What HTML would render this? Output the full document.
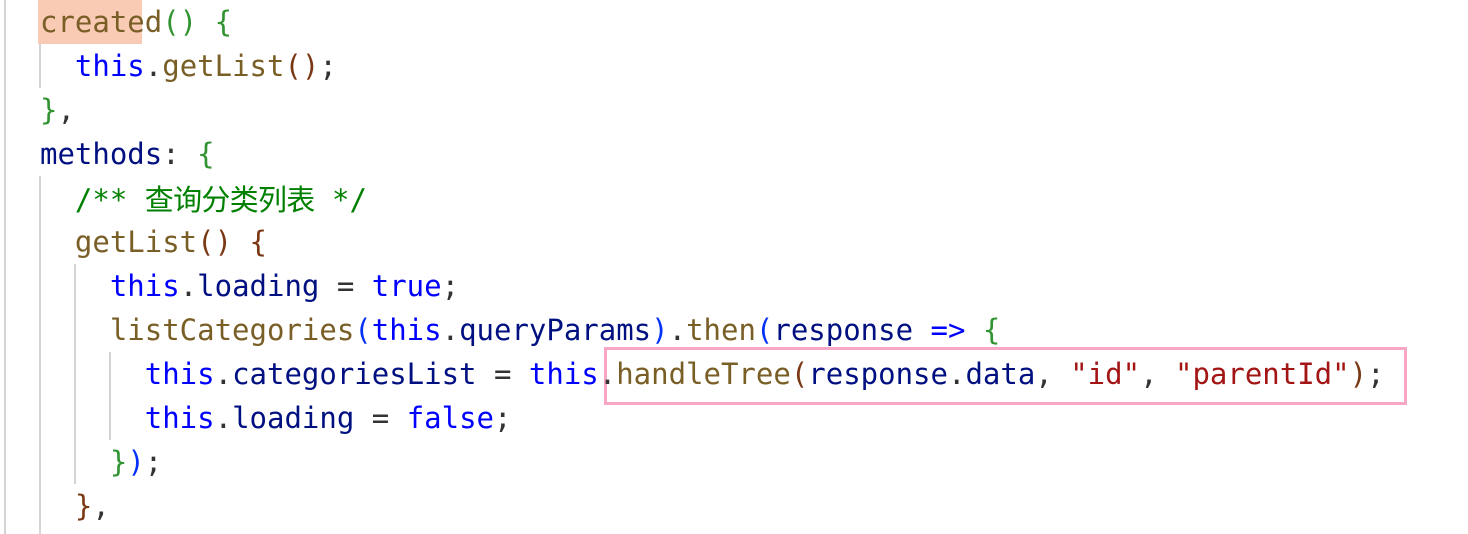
<!DOCTYPE html>
<html><head><meta charset="utf-8"><style>
html,body{margin:0;padding:0;background:#fff;width:1468px;height:534px;overflow:hidden;position:relative}
.l{position:absolute;left:40px;height:44px;line-height:44px;white-space:pre;font-family:"DejaVu Sans Mono","Liberation Mono","Noto Sans CJK SC",monospace;font-size:29px;color:#333}
.g{position:absolute;width:2px;background:#d4d4d4}
.k{color:#0000ff}.f{color:#795e26}.v{color:#001080}.s{color:#a31515}.c{color:#008000}.b1{color:#319331}.b2{color:#7b3814}.b3{color:#0431fa}
.cj{font-family:"Noto Sans CJK SC",sans-serif;letter-spacing:-0.7px}
</style></head><body>
<div style="position:absolute;left:38px;top:0;width:104px;height:44px;background:#f9cbb4"></div>
<div class="g" style="left:4px;top:0;height:534px"></div>
<div class="g" style="left:39px;top:44px;height:44px"></div>
<div class="g" style="left:39px;top:176px;height:358px"></div>
<div class="g" style="left:74px;top:264px;height:220px"></div>
<div class="g" style="left:109px;top:352px;height:88px"></div>
<div style="position:absolute;left:604px;top:347px;width:797px;height:52px;border:3px solid #f7a7c5"></div>
<div class="l" style="top:0"><span class="f">created</span><span class="b1">()</span> <span class="b1">{</span></div>
<div class="l" style="top:44px">  <span class="k">this</span>.<span class="f">getList</span><span class="b2">()</span>;</div>
<div class="l" style="top:88px"><span class="b1">}</span>,</div>
<div class="l" style="top:132px"><span class="v">methods</span>: <span class="b1">{</span></div>
<div class="l" style="top:176px">  <span class="c">/** <span class="cj">查询分类列表</span> */</span></div>
<div class="l" style="top:220px">  <span class="f">getList</span><span class="b2">()</span> <span class="b2">{</span></div>
<div class="l" style="top:264px">    <span class="k">this</span>.<span class="v">loading</span> = <span class="k">true</span>;</div>
<div class="l" style="top:308px">    <span class="f">listCategories</span><span class="b3">(</span><span class="k">this</span>.<span class="v">queryParams</span><span class="b3">)</span>.<span class="f">then</span><span class="b3">(</span><span class="v">response</span> <span class="k">=&gt;</span> <span class="b1">{</span></div>
<div class="l" style="top:352px">      <span class="k">this</span>.<span class="v">categoriesList</span> = <span class="k">this</span>.<span class="f">handleTree</span><span class="b2">(</span><span class="v">response</span>.<span class="v">data</span>, <span class="s">"id"</span>, <span class="s">"parentId"</span><span class="b2">)</span>;</div>
<div class="l" style="top:396px">      <span class="k">this</span>.<span class="v">loading</span> = <span class="k">false</span>;</div>
<div class="l" style="top:440px">    <span class="b1">}</span><span class="b3">)</span>;</div>
<div class="l" style="top:484px">  <span class="b2">}</span>,</div>
</body></html>
